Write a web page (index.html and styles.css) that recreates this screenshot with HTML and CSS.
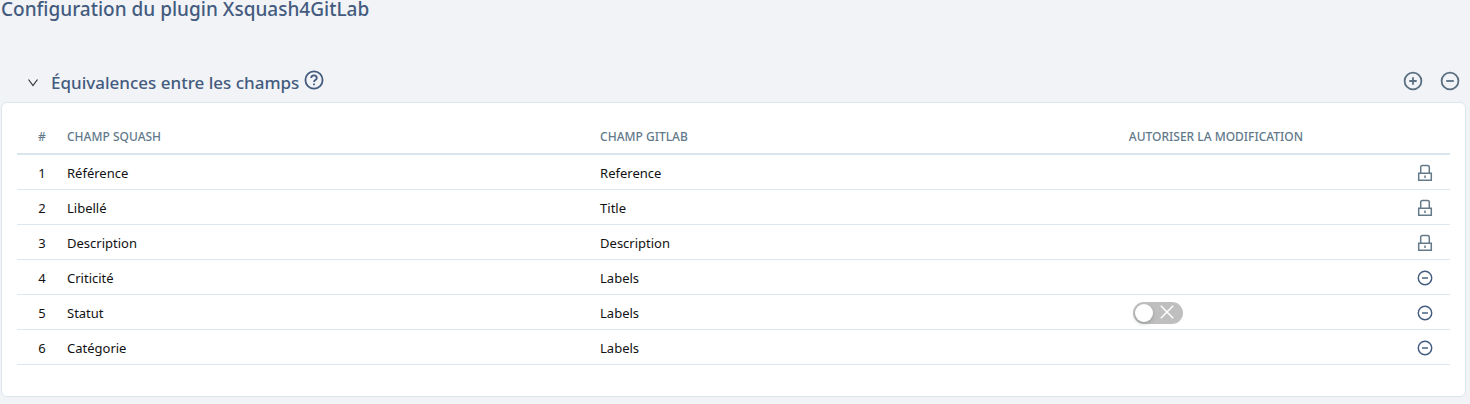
FILE: index.html
```html
<!doctype html>
<html lang="fr">
<head>
<meta charset="UTF-8">
<title>Configuration du plugin Xsquash4GitLab</title>
<link rel="stylesheet" href="styles.css">
</head>
<body>
	<svg class="sprite" aria-hidden="true">
		<symbol id="plus" viewBox="0 0 20 20">
			<circle cx="10" cy="10" r="8.4"/>
			<path d="M6.3 10h7.4M10 6.3v7.4"/>
		</symbol>
		<symbol id="minus" viewBox="0 0 20 20">
			<circle cx="10" cy="10" r="8.4"/>
			<path d="M6.2 10h7.6"/>
		</symbol>
		<symbol id="lock" viewBox="0 0 16 18">
			<path d="M1.7 9.2h12.6v7.1H1.7zM3.7 9V3.2Q3.7 1.5 5.4 1.5h5.2Q12.3 1.5 12.3 3.2V9M8 11.4v2.6"/>
		</symbol>
	</svg>

	<h1>Configuration du plugin Xsquash4GitLab</h1>

	<section>
		<header class="panel-header">
			<button type="button" class="icon-button toggle" aria-label="Replier" aria-expanded="true">
				<svg class="chevron" viewBox="0 0 12 12"><path d="M1.5 2.5L6 8.5l4.5-6"/></svg>
			</button>
			<h2>Équivalences entre les champs</h2>
			<button type="button" class="icon-button help" aria-label="Aide">
				<svg class="icon" viewBox="0 0 20 20">
					<circle cx="10" cy="10" r="8.6"/>
					<path d="M7.2 8C7.2 6.3 8.4 5.3 10 5.3s2.8 1 2.8 2.6c0 2-2.8 2.1-2.8 4.1M10 13.5v1.7"/>
				</svg>
			</button>
			<div class="actions">
				<button type="button" class="icon-button" aria-label="Ajouter"><svg class="icon"><use href="#plus"/></svg></button>
				<button type="button" class="icon-button" aria-label="Supprimer"><svg class="icon"><use href="#minus"/></svg></button>
			</div>
		</header>

		<div class="panel">
			<table>
				<colgroup>
					<col class="col-index">
					<col class="col-squash">
					<col class="col-gitlab">
					<col>
					<col class="col-action">
				</colgroup>
				<thead>
					<tr>
						<th class="center" scope="col">#</th>
						<th scope="col">CHAMP SQUASH</th>
						<th scope="col">CHAMP GITLAB</th>
						<th scope="col">AUTORISER LA MODIFICATION</th>
						<td></td>
					</tr>
				</thead>
				<tbody>
					<tr>
						<td class="center">1</td>
						<td>Référence</td>
						<td>Reference</td>
						<td></td>
						<td class="center"><svg class="lock"><use href="#lock"/></svg></td>
					</tr>
					<tr>
						<td class="center">2</td>
						<td>Libellé</td>
						<td>Title</td>
						<td></td>
						<td class="center"><svg class="lock"><use href="#lock"/></svg></td>
					</tr>
					<tr>
						<td class="center">3</td>
						<td>Description</td>
						<td>Description</td>
						<td></td>
						<td class="center"><svg class="lock"><use href="#lock"/></svg></td>
					</tr>
					<tr>
						<td class="center">4</td>
						<td>Criticité</td>
						<td>Labels</td>
						<td></td>
						<td class="center"><button type="button" class="icon-button remove" aria-label="Supprimer Criticité"><svg class="icon"><use href="#minus"/></svg></button></td>
					</tr>
					<tr>
						<td class="center">5</td>
						<td>Statut</td>
						<td>Labels</td>
						<td>
							<label class="switch">
								<input type="checkbox" role="switch" aria-label="Autoriser la modification de Statut">
								<svg class="cross" viewBox="0 0 14 14"><path d="M.8.8l12.4 12.4M13.2.8L.8 13.2"/></svg>
							</label>
						</td>
						<td class="center"><button type="button" class="icon-button remove" aria-label="Supprimer Statut"><svg class="icon"><use href="#minus"/></svg></button></td>
					</tr>
					<tr>
						<td class="center">6</td>
						<td>Catégorie</td>
						<td>Labels</td>
						<td></td>
						<td class="center"><button type="button" class="icon-button remove" aria-label="Supprimer Catégorie"><svg class="icon"><use href="#minus"/></svg></button></td>
					</tr>
				</tbody>
			</table>
		</div>
	</section>
</body>
</html>
```

FILE: styles.css
```css
* {
	box-sizing:border-box;
	}

body {
	margin:0;
	padding:0 4px 7px 1px;
	background:#f2f3f7;
	color:#111;
	font-family:"Noto Sans", "Open Sans", sans-serif;
	font-size:13px;
	line-height:20px;
	}

h1, h2 {
	margin:0;
	color:#435b7e;
	font-weight:500;
	}

h1 {
	font-size:19px;
	line-height:18px;
	}

h2 {
	font-size:17px;
	line-height:24px;
	}

svg {
	display:block;
	fill:none;
	stroke:currentColor;
	}

.sprite {
	position:absolute;
	width:0;
	height:0;
	}

.icon-button {
	display:block;
	padding:0;
	border:0;
	background:none;
	color:#5a6f80;
	cursor:pointer;
	}

.icon {
	width:20px;
	height:20px;
	stroke-width:1.8;
	}

.panel-header {
	display:flex;
	align-items:center;
	padding:52px 6px 6px 26px;
	}

.toggle {
	margin-right:12px;
	color:#333;
	}

.chevron {
	width:12px;
	height:12px;
	stroke-width:1.2;
	}

.help {
	margin:0 0 6px 5px;
	color:#435b7e;
	}

.actions {
	display:flex;
	gap:17px;
	margin:0 0 4px auto;
	}

.panel {
	padding:16px 15px 31px;
	border:1px solid #dbe7ed;
	border-radius:6px;
	background:#fff;
	}

table {
	width:100%;
	border-collapse:separate;
	border-spacing:0;
	table-layout:fixed;
	}

th, td {
	height:35px;
	padding:2px 0 0;
	border-bottom:1px solid #dde7ed;
	text-align:left;
	}

th {
	color:#62798a;
	font-size:12px;
	font-weight:500;
	}

thead th, thead td {
	height:36px;
	border-bottom:2px solid #dae6ed;
	}

.center {
	text-align:center;
	}

.center svg {
	margin:0 auto;
	}

.col-index, .col-action {
	width:50px;
	}

.col-squash {
	width:37.2%;
	}

.col-gitlab {
	width:36.9%;
	}

.lock {
	width:16px;
	height:18px;
	color:#657a88;
	stroke-width:1.5;
	}

.remove {
	margin:0 auto;
	color:#435b7e;
	}

.remove .icon {
	width:16px;
	height:16px;
	}

.switch {
	display:flex;
	position:relative;
	width:50px;
	height:22px;
	margin-left:4px;
	}

.switch input {
	appearance:none;
	width:50px;
	height:22px;
	margin:0;
	padding:2px;
	border-radius:11px;
	background:#bfbfbf;
	}

.switch input::before {
	content:"";
	display:block;
	width:18px;
	height:18px;
	border-radius:50%;
	background:#fff;
	box-shadow:0 2px 4px rgba(0, 35, 11, .2);
	}

.cross {
	position:absolute;
	top:3px;
	right:9px;
	width:14px;
	height:14px;
	color:#fff;
	stroke-width:1.5;
	}
```
